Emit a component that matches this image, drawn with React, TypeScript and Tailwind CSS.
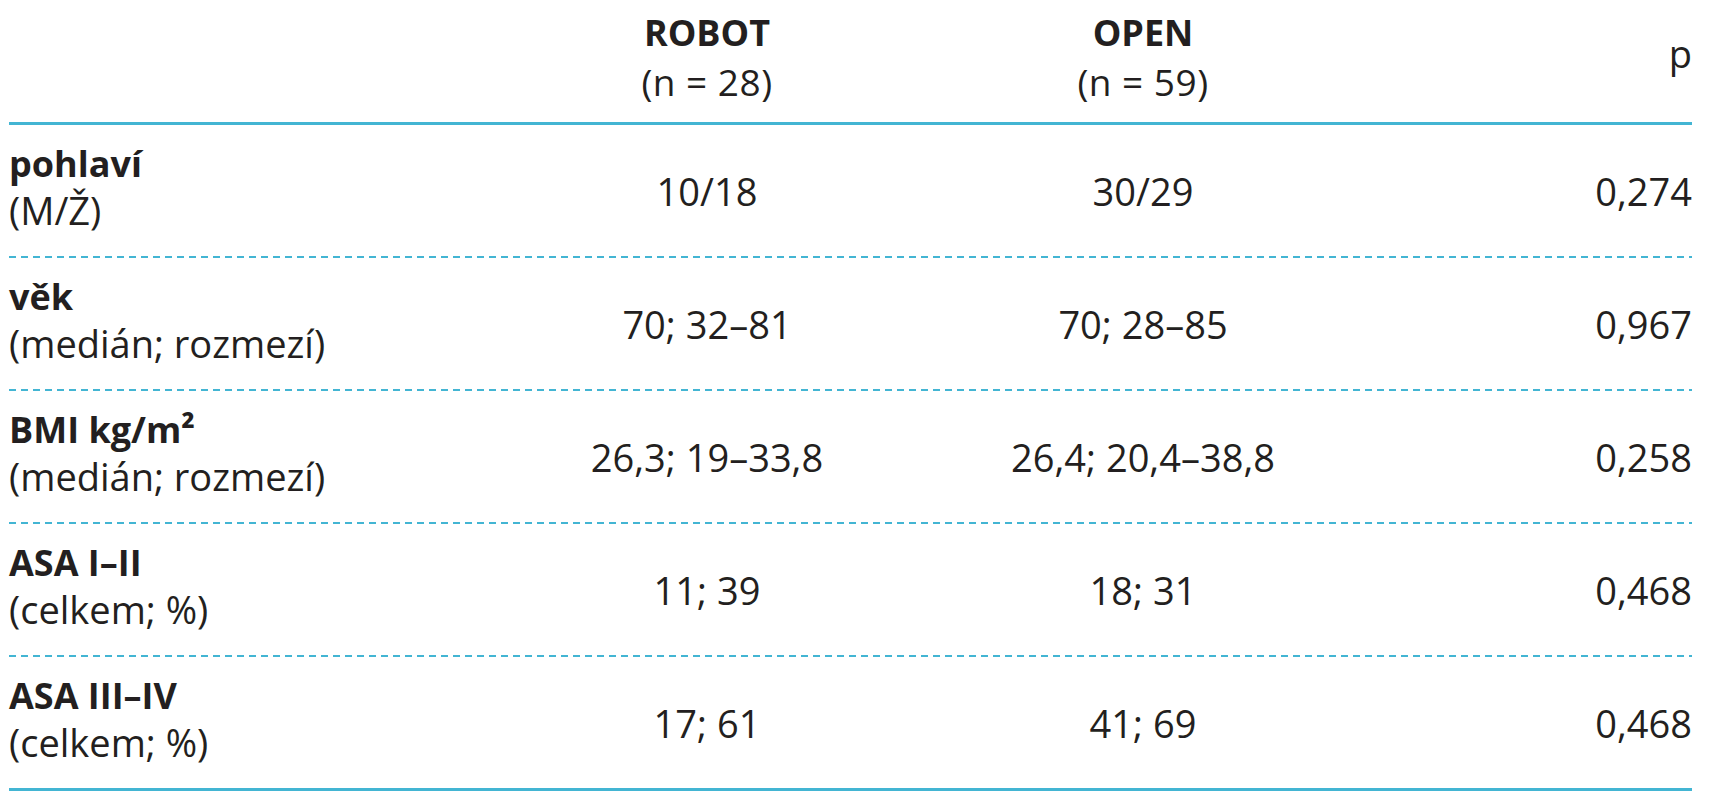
// Patient characteristics table: ROBOT vs OPEN cohorts.

const rows = [
  { label: "pohlaví", sub: "(M/Ž)", robot: "10/18", open: "30/29", p: "0,274" },
  { label: "věk", sub: "(medián; rozmezí)", robot: "70; 32–81", open: "70; 28–85", p: "0,967" },
  { label: "BMI kg/m²", sub: "(medián; rozmezí)", robot: "26,3; 19–33,8", open: "26,4; 20,4–38,8", p: "0,258" },
  { label: "ASA I–II", sub: "(celkem; %)", robot: "11; 39", open: "18; 31", p: "0,468" },
  { label: "ASA III–IV", sub: "(celkem; %)", robot: "17; 61", open: "41; 69", p: "0,468" },
];

const cols = "grid grid-cols-[498px_400px_472px_1fr]";

function Dashed() {
  return (
    <div className="h-[2px] bg-[repeating-linear-gradient(90deg,#43b5d3_0px,#43b5d3_7px,transparent_7px,transparent_12px)]" />
  );
}

function HeadCell({ title, n }: { title: string; n: string }) {
  return (
    <div className="text-center">
      <div className="font-bold text-[36px] leading-[48px]">{title}</div>
      <div className="text-[37px] leading-[50px] tracking-[0.5px]">{n}</div>
    </div>
  );
}

export default function App() {
  return (
    <div className="w-[1710px] h-[800px] bg-white pl-[9px] pr-[18px] text-[#231f20] text-[38px] leading-[46px] font-['Open_Sans',sans-serif]">
      {/* header */}
      <div className={`${cols} items-start h-[122px] pt-[9px]`}>
        <div />
        <HeadCell title="ROBOT" n="(n = 28)" />
        <HeadCell title="OPEN" n="(n = 59)" />
        <div className="text-right mt-[21px]">p</div>
      </div>
      <div className="h-[3px] bg-[#43b5d3]" />

      {rows.map((r, i) => (
        <div key={r.label + i}>
          <div className={`${cols} items-center h-[131px]`}>
            <div className="pb-[8px]">
              <div className="font-bold text-[36px]">{r.label}</div>
              <div>{r.sub}</div>
            </div>
            <div className="text-center">{r.robot}</div>
            <div className="text-center">{r.open}</div>
            <div className="text-right">{r.p}</div>
          </div>
          {i < rows.length - 1 ? <Dashed /> : <div className="h-[3px] bg-[#43b5d3]" />}
        </div>
      ))}
    </div>
  );
}
